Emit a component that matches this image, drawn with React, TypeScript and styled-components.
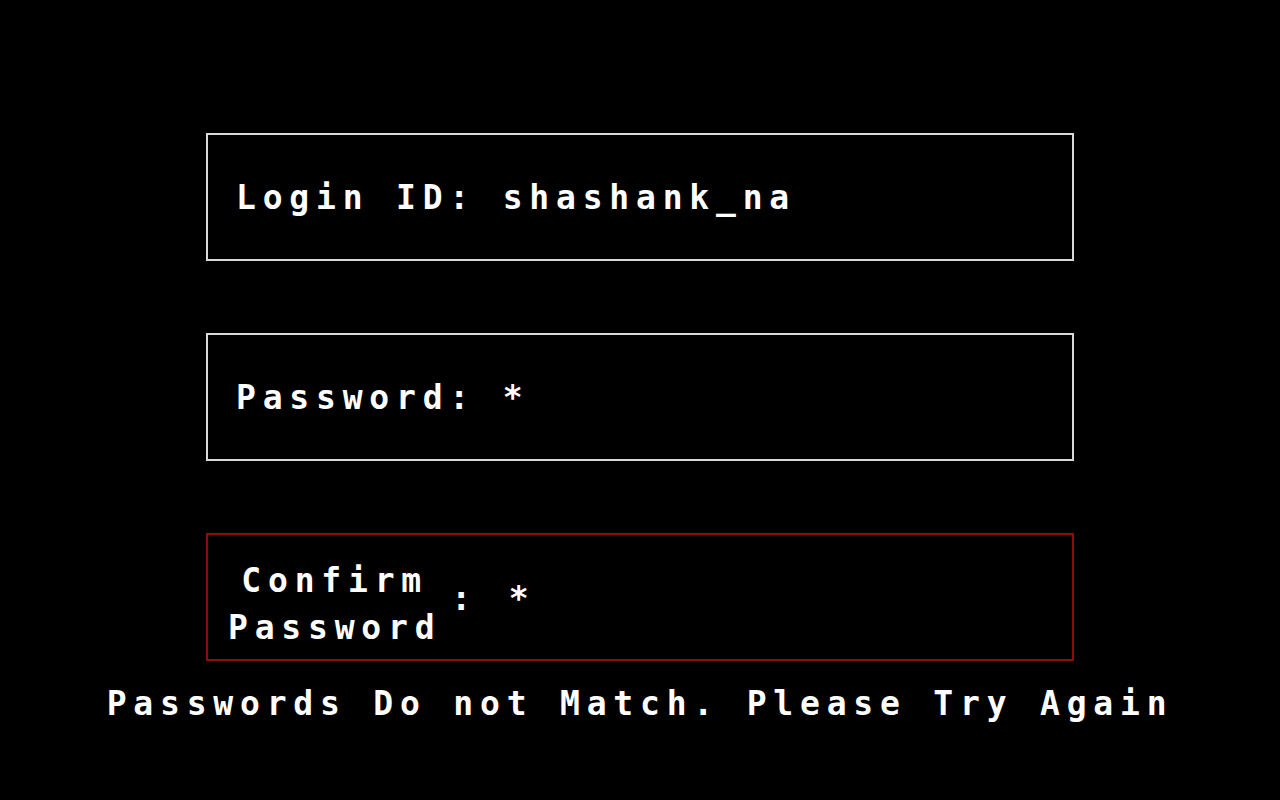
import React from "react";
import styled, { createGlobalStyle } from "styled-components";

const GlobalStyle = createGlobalStyle`
  html, body {
    margin: 0;
    padding: 0;
    background: #000;
  }
  body {
    font-family: "DejaVu Sans Mono", "Liberation Mono", monospace;
    color: #fff;
  }
`;

const Page = styled.main`
  width: 1280px;
  height: 800px;
  background: #000;
  display: flex;
  flex-direction: column;
  align-items: center;
  padding-top: 133px;
  box-sizing: border-box;
`;

const Form = styled.div`
  display: flex;
  flex-direction: column;
  gap: 72px;
`;

const Field = styled.div<{ $error?: boolean }>`
  width: 868px;
  height: 128px;
  box-sizing: border-box;
  border: 2px solid ${(p) => (p.$error ? "#8e0c0c" : "#d8d8d8")};
  display: flex;
  align-items: center;
  padding-left: ${(p) => (p.$error ? "20px" : "28px")};
`;

const PixelText = styled.span`
  font-family: "DejaVu Sans Mono", "Liberation Mono", monospace;
  font-weight: bold;
  font-size: 33px;
  letter-spacing: 6.8px;
  color: #fff;
  white-space: pre;
`;

const StackedLabel = styled(PixelText)`
  display: block;
  text-align: center;
  line-height: 47px;
  white-space: normal;
  width: min-content;
  margin-top: 14px;
`;

const Suffix = styled(PixelText)`
  margin-left: 10px;
  margin-top: 2px;
  word-spacing: 4px;
`;

const ErrorMessage = styled(PixelText)`
  display: block;
  margin-top: 23px;
  text-align: center;
`;

export default function App() {
  return (
    <>
      <GlobalStyle />
      <Page>
        <Form>
          <Field>
            <PixelText>Login ID: shashank_na</PixelText>
          </Field>
          <Field>
            <PixelText>Password: *</PixelText>
          </Field>
          <Field $error>
            <StackedLabel>Confirm Password</StackedLabel>
            <Suffix>: *</Suffix>
          </Field>
        </Form>
        <ErrorMessage>Passwords Do not Match. Please Try Again</ErrorMessage>
      </Page>
    </>
  );
}
